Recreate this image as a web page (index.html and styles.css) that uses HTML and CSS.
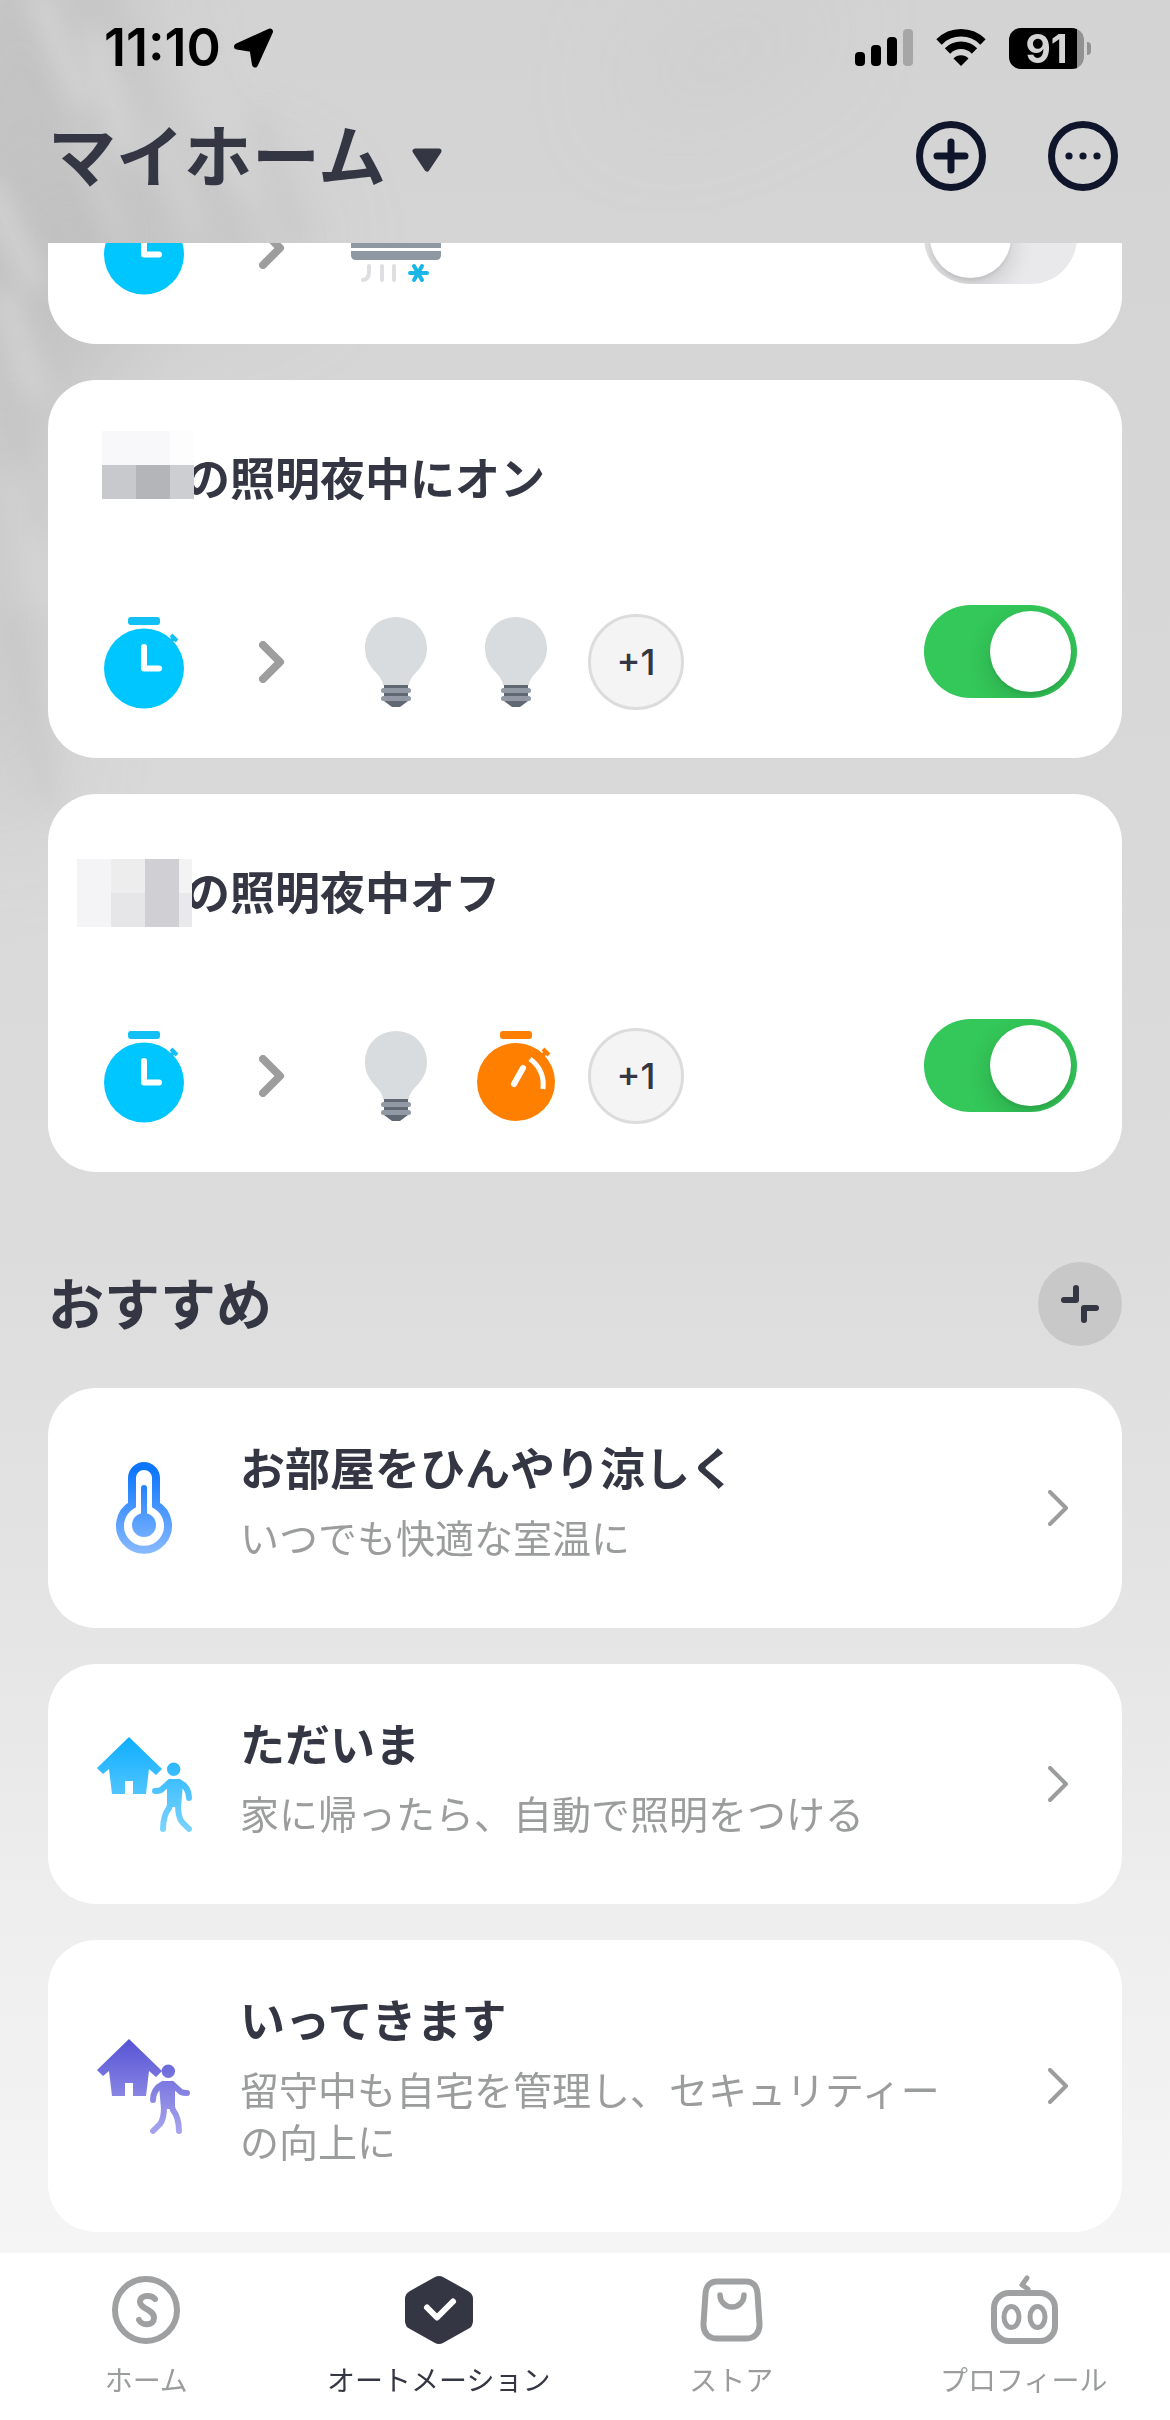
FILE: index.html
```html
<!DOCTYPE html>
<html lang="ja">
<head>
<meta charset="utf-8">
<meta name="viewport" content="width=device-width, initial-scale=1">
<title>オートメーション</title>
<link rel="stylesheet" href="styles.css">
</head>
<body>
<svg class="defs" width="0" height="0" aria-hidden="true">
  <defs>
    <linearGradient id="g-thermo" gradientUnits="userSpaceOnUse" x1="0" y1="0" x2="0" y2="96"><stop offset="0.1" stop-color="#0d76ff"/><stop offset="1" stop-color="#8cbcff"/></linearGradient>
    <linearGradient id="g-home" gradientUnits="userSpaceOnUse" x1="0" y1="0" x2="0" y2="96"><stop offset="0" stop-color="#0cadff"/><stop offset="1" stop-color="#7dd4ff"/></linearGradient>
    <linearGradient id="g-leave" gradientUnits="userSpaceOnUse" x1="0" y1="0" x2="0" y2="96"><stop offset="0" stop-color="#5552d4"/><stop offset="1" stop-color="#a9a6ee"/></linearGradient>
    <symbol id="i-clock" viewBox="0 0 96 96">
      <rect x="32" y="3" width="32" height="8" rx="3" fill="#12c0f5"/>
      <circle cx="48" cy="54.500" r="40" fill="#00c6ff"/>
      <path d="M73 29l5-5M75 21l6 6" stroke="#12c0f5" stroke-width="4" fill="none"/>
      <path d="M48 33v21.500h15" stroke="#fff" stroke-width="6" stroke-linecap="round" stroke-linejoin="round" fill="none"/>
    </symbol>
    <symbol id="i-timer" viewBox="0 0 96 96">
      <rect x="32" y="3" width="32" height="8" rx="3" fill="#ff8000"/>
      <circle cx="48" cy="54" r="39" fill="#ff8000"/>
      <path d="M73 29l5-5M75 21l6 6" stroke="#ff8000" stroke-width="4" fill="none"/>
      <path d="M46 56l9-16" stroke="#fff" stroke-width="6" stroke-linecap="round" fill="none"/>
      <path d="M62 31Q77 42 75 61" stroke="#fff" stroke-width="5" fill="none"/>
    </symbol>
    <symbol id="i-bulb" viewBox="0 0 96 96">
      <path d="M48 3c18 0 31 14 31 31 0 21-17 25-18 37H35C34 59 17 55 17 34 17 17 30 3 48 3z" fill="#d9dcdf"/>
      <path d="M36 71h24v16l-8 6h-8l-8-6z" fill="#5f6873"/>
      <rect x="33" y="74" width="30" height="5" rx="2.500" fill="#9199a5"/>
      <rect x="33" y="82" width="30" height="5" rx="2.500" fill="#9199a5"/>
    </symbol>
    <symbol id="i-aircon" viewBox="0 0 96 96">
      <path d="M3 24h90v24H3z" fill="#8e98a3"/>
      <path d="M3 51h90v4q0 5-5 5H8q-5 0-5-5z" fill="#8e98a3"/>
      <path d="M21 66v6q0 7-6 8M34 66v14M46 66v14" stroke="#dfdfe1" stroke-width="4" stroke-linecap="round" fill="none"/>
      <path d="M62 73h17M66 66l8 14M74 66l-8 14" stroke="#1ab6e8" stroke-width="4" stroke-linecap="round" fill="none"/>
    </symbol>
    <symbol id="i-arrow" viewBox="0 0 26 42">
      <path d="M4 4l17 17L4 38" stroke="#9d9d9d" stroke-width="8" stroke-linecap="round" stroke-linejoin="round" fill="none"/>
    </symbol>
    <symbol id="i-next" viewBox="0 0 20 36">
      <path d="M2 2l16 16L2 34" stroke="#9b9c9c" stroke-width="4" stroke-linecap="round" stroke-linejoin="round" fill="none"/>
    </symbol>
    <symbol id="i-house" viewBox="0 0 66 60">
      <path d="M33 1L1 32l6 6 6-5 3 25h13V45h8v13h13l3-25 7 6 6-6z"/>
    </symbol>
    <g id="i-person" stroke-linecap="round" stroke-linejoin="round">
      <circle cx="77.700" cy="33.300" r="6.700" stroke="none"/>
      <path d="M73 43h10l4 5-2 23H71V50l-1-4z" stroke="none"/>
      <path d="M74 46L65 54q-2 1-6 1M83 46q10 5 10 16M74 69l-1 3q-6 8-6 21M82 69q0 12 4 17l7 7" stroke-width="6" fill="none"/>
    </g>
  </defs>
</svg>

<svg class="backdrop" aria-hidden="true">
  <defs><filter id="soft" x="-20%" y="-20%" width="140%" height="140%"><feGaussianBlur stdDeviation="12"/></filter>
  <filter id="haze" x="-50%" y="-50%" width="200%" height="200%"><feGaussianBlur stdDeviation="50"/></filter></defs>
  <g filter="url(#haze)">
    <ellipse cx="20" cy="180" rx="130" ry="260" fill="#b9b9b9" opacity=".6"/>
    <ellipse cx="150" cy="240" rx="150" ry="60" fill="#bcbcbc" opacity=".6"/>
    <ellipse cx="0" cy="600" rx="45" ry="240" fill="#bdbdbd" opacity=".6"/>
    <path d="M640 95l170 -80" stroke="#c6c6c6" stroke-width="50" opacity=".5"/>
  </g>
  <g filter="url(#soft)" fill="none" stroke-linecap="round">
    <path d="M40 0l40 100M95 40l30 110M-10 190l45 90M5 300l30 90M20 480l20 120" stroke="#d8d8d8" stroke-width="22" opacity=".75"/>
    <path d="M75 130l45 105M140 90l55 140M180 20l70 170" stroke="#d6d6d6" stroke-width="16" opacity=".6"/>
    <path d="M200 160l40 90M100 -10l60 140M260 120l40 120M10 400l25 130M10 620l40 180" stroke="#bebebe" stroke-width="18" opacity=".4"/>
  </g>
</svg>

<div class="app">
  <header class="top">
    <div class="status">
      <div class="status-left">
        <span class="time">11:10</span>
        <svg width="40" height="40" viewBox="0 0 40 40" aria-hidden="true"><path d="M3 18.500L36 3.500 21 36.500 18.500 21z" stroke="#000" stroke-width="6" stroke-linejoin="round"/></svg>
      </div>
      <div class="status-right">
        <svg width="58" height="38" viewBox="0 0 58 38" aria-hidden="true"><rect y="23" width="10" height="14" rx="4"/><rect x="16" y="16" width="10" height="21" rx="4"/><rect x="32" y="8" width="10" height="29" rx="4"/><rect x="48" width="10" height="37" rx="4" fill="#a6a6a6"/></svg>
        <svg width="50" height="38" viewBox="0 0 50 38" aria-hidden="true"><g fill="none" stroke="#000" stroke-width="7.500"><path d="M3 13a31 31 0 0 1 44 0"/><path d="M11.500 22a19 19 0 0 1 27 0"/></g><path d="M17.500 29.500a10.500 10.500 0 0 1 15 0L25 37z"/></svg>
        <div class="battery"><span class="battery-level">91</span><span class="battery-nub"></span></div>
      </div>
    </div>
    <div class="bar">
      <h1><button class="home-select" type="button">マイホーム
        <svg width="30" height="26" viewBox="0 0 30 26" aria-hidden="true"><path d="M3 3h24L15 21z" fill="#343643" stroke="#343643" stroke-width="5" stroke-linejoin="round"/></svg>
      </button></h1>
      <div class="actions">
        <button type="button" aria-label="追加"><svg width="70" height="70" viewBox="0 0 70 70"><circle cx="35" cy="35" r="31.500" stroke="#0f162b" stroke-width="7" fill="none"/><path d="M35 21v28M21 35h28" stroke="#0f162b" stroke-width="7" stroke-linecap="round"/></svg></button>
        <button type="button" aria-label="メニュー"><svg width="70" height="70" viewBox="0 0 70 70"><circle cx="35" cy="35" r="31.500" stroke="#0f162b" stroke-width="7" fill="none"/><g fill="#0f162b"><circle cx="21" cy="35" r="3.600"/><circle cx="35" cy="35" r="3.600"/><circle cx="49" cy="35" r="3.600"/></g></svg></button>
      </div>
    </div>
  </header>

  <main class="content">
    <section class="stack">
      <article class="card scene scene-scrolled">
        <div class="flow">
          <svg class="slot"><use href="#i-clock"/></svg>
          <svg class="arrow"><use href="#i-arrow"/></svg>
          <div class="devices"><svg class="slot"><use href="#i-aircon"/></svg></div>
          <input class="switch" type="checkbox" aria-label="エアコン">
        </div>
      </article>
      <article class="card scene">
        <h2 class="scene-title"><span class="mask mask-a" aria-hidden="true"><i></i><i></i><i></i><i></i><i></i><i></i></span>の照明夜中にオン</h2>
        <div class="flow">
          <svg class="slot"><use href="#i-clock"/></svg>
          <svg class="arrow"><use href="#i-arrow"/></svg>
          <div class="devices"><svg class="slot"><use href="#i-bulb"/></svg><svg class="slot"><use href="#i-bulb"/></svg><span class="more">+1</span></div>
          <input class="switch" type="checkbox" checked aria-label="の照明夜中にオン">
        </div>
      </article>
      <article class="card scene">
        <h2 class="scene-title"><span class="mask mask-b" aria-hidden="true"><i></i><i></i><i></i><i></i></span>の照明夜中オフ</h2>
        <div class="flow">
          <svg class="slot"><use href="#i-clock"/></svg>
          <svg class="arrow"><use href="#i-arrow"/></svg>
          <div class="devices"><svg class="slot"><use href="#i-bulb"/></svg><svg class="slot"><use href="#i-timer"/></svg><span class="more">+1</span></div>
          <input class="switch" type="checkbox" checked aria-label="の照明夜中オフ">
        </div>
      </article>
    </section>

    <div class="section-head">
      <h2>おすすめ</h2>
      <button class="collapse" type="button" aria-label="折りたたむ"><svg width="38" height="38" viewBox="0 0 38 38"><path d="M3 15h12V3M35 23H23v12" stroke="#343643" stroke-width="6" stroke-linecap="round" stroke-linejoin="round" fill="none"/></svg></button>
    </div>

    <section class="stack">
      <a class="card tip" href="#cool">
        <svg class="slot" viewBox="0 0 96 96"><path d="M36 45V18a12 12 0 0 1 24 0v27a24 24 0 1 1-24 0z" fill="none" stroke="url(#g-thermo)" stroke-width="8"/><circle cx="48" cy="65" r="12" fill="url(#g-thermo)"/><path d="M45 28a3 3 0 0 1 6 0v30h-6z" fill="url(#g-thermo)"/></svg>
        <div class="tip-text"><h3>お部屋をひんやり涼しく</h3><p>いつでも快適な室温に</p></div>
        <svg class="next"><use href="#i-next"/></svg>
      </a>
      <a class="card tip" href="#back">
        <svg class="slot" viewBox="0 0 96 96" fill="url(#g-home)" stroke="none"><use href="#i-house" width="66" height="60"/><use href="#i-person" stroke="url(#g-home)"/></svg>
        <div class="tip-text"><h3>ただいま</h3><p>家に帰ったら、自動で照明をつける</p></div>
        <svg class="next"><use href="#i-next"/></svg>
      </a>
      <a class="card tip" href="#leave">
        <svg class="slot" viewBox="0 0 96 96" fill="url(#g-leave)" stroke="none"><use href="#i-house" width="66" height="60"/><use href="#i-person" stroke="url(#g-leave)" transform="translate(150) scale(-1 1)"/></svg>
        <div class="tip-text"><h3>いってきます</h3><p>留守中も自宅を管理し、セキュリティーの向上に</p></div>
        <svg class="next"><use href="#i-next"/></svg>
      </a>
    </section>
  </main>

  <nav class="tabs">
    <a href="#home"><svg viewBox="0 0 68 68"><circle cx="34" cy="34" r="31" stroke-width="6"/><path d="M43 23C40 19 28 18 28 26 28 33 42 33 42 42c0 8-12 8-15 2" stroke-width="6"/></svg>ホーム</a>
    <a href="#automation" class="active" aria-current="page"><svg viewBox="0 0 68 68"><path d="M34 9l25 14v22L34 59 9 45V23z" fill="#343643" stroke="#343643" stroke-width="18"/><path d="M22 31.500l10 10 16-16" stroke="#fff" stroke-width="6"/></svg>オートメーション</a>
    <a href="#store"><svg viewBox="0 0 68 68"><path d="M20 5.500h29c7 0 11 5 11.500 12l2 30c.5 9-5 15-13 15h-30c-8 0-13.500-6-13-15l2-30c.5-7 4.500-12 11.500-12z" stroke-width="6"/><path d="M23 19a12 12 0 0 0 24 0" stroke-width="5.500"/></svg>ストア</a>
    <a href="#profile"><svg viewBox="0 0 68 68"><rect x="4" y="17" width="61" height="48" rx="15" stroke-width="6"/><ellipse cx="21.500" cy="41" rx="7.500" ry="10.500" stroke-width="5"/><ellipse cx="47.500" cy="41" rx="7.500" ry="10.500" stroke-width="5"/><path d="M37 2l-5 7 6 4" stroke-width="5"/></svg>プロフィール</a>
  </nav>
</div>
</body>
</html>
```
FILE: styles.css
```css
* { box-sizing: border-box; margin: 0; padding: 0; }

body {
  position: relative;
  font-family: "Noto Sans CJK JP", "Inter", sans-serif;
  color: #343643;
  background: linear-gradient(#d3d3d3 0%, #d8d8d8 30%, #dcdcdc 51%, #e4e4e4 66%, #eeeeee 79%, #f5f5f5 93%);
}

button { border: 0; background: none; color: inherit; font: inherit; cursor: pointer; }
a { color: inherit; text-decoration: none; }
svg { display: block; flex: none; }

.defs { position: absolute; }
.backdrop { position: absolute; top: 0; left: 0; width: 100%; height: 1000px; }

.app {
  position: relative;
  display: flex;
  flex-direction: column;
  min-height: 100vh;
}

/* Status bar and title bar */
.top { padding-bottom: 27px; }

.status {
  display: flex;
  justify-content: space-between;
  align-items: center;
  height: 96px;
  padding: 0 79px 0 104px;
}
.status-left, .status-right { display: flex; align-items: center; }
.status-left { gap: 13px; }
.status-right { gap: 23px; }

.time {
  color: #000;
  font: 600 52px/60px "Inter", sans-serif;
}

.battery { display: flex; align-items: center; gap: 3px; }
.battery-level {
  width: 75px;
  height: 41px;
  border-radius: 12px;
  background: linear-gradient(90deg, #000 68px, #929292 68px);
  color: #d4d4d4;
  font: 700 39px/41px "Inter", sans-serif;
  text-align: center;
}
.battery-nub { width: 4px; height: 13px; border-radius: 0 4px 4px 0; background: #929292; }

.bar {
  display: flex;
  justify-content: space-between;
  align-items: center;
  height: 120px;
  padding: 0 52px 0 48px;
}
.home-select {
  display: flex;
  align-items: center;
  gap: 26px;
  padding-bottom: 6px;
  font-size: 68px;
  line-height: 80px;
  font-weight: 600;
}
.home-select svg { margin-top: 16px; }
.actions { display: flex; gap: 62px; }

/* Cards */
.content { padding: 0 48px 19px; }
.stack { display: flex; flex-direction: column; gap: 36px; }
.card { background: #fff; border-radius: 48px; }

.slot { width: 96px; height: 96px; }

.scene { padding: 64px 45px 48px 48px; }
.scene-scrolled {
  display: flex;
  align-items: flex-end;
  height: 101px;
  padding-top: 0;
  overflow: hidden;
  border-radius: 0 0 48px 48px;
}
.scene-title {
  position: relative;
  margin-bottom: 104px;
  padding-left: 89px;
  font-size: 45px;
  line-height: 66px;
  font-weight: 600;
}
.mask { position: absolute; display: grid; }
.mask-a { top: -13px; left: 6px; grid-template: 34px 34px / 34px 34px 24px; }
.mask-a i { background: #f8f8fa; }
.mask-a i:nth-child(3) { background: #fdfdfe; }
.mask-a i:nth-child(4) { background: #c8c9cd; }
.mask-a i:nth-child(5) { background: #b4b5b9; }
.mask-a i:nth-child(6) { background: #cdced2; }
.mask-b { top: 1px; left: -19px; grid-template: 68px / 34px 34px 34px 13px; }
.mask-b i { background: #f4f4f6; }
.mask-b i:nth-child(2) { background: linear-gradient(#ededee 50%, #e6e6e8 50%); }
.mask-b i:nth-child(3) { background: #cfcfd4; }
.mask-b i:nth-child(4) { background: linear-gradient(#f3f3f4 50%, #e9e9eb 50%); }

.flow { display: flex; align-items: center; width: 100%; height: 96px; }
.arrow { width: 26px; height: 42px; margin: 0 63px 0 67px; }
.devices { display: flex; gap: 24px; }
.more {
  width: 96px;
  height: 96px;
  border: 3px solid #dcdcdc;
  border-radius: 50%;
  background: #f4f4f4;
  font: 500 36px/90px "Inter", sans-serif;
  text-align: center;
}

.switch {
  appearance: none;
  align-self: flex-end;
  width: 153px;
  height: 93px;
  margin: 0 0 12px auto;
  padding: 6px;
  border-radius: 47px;
  background: #e9e9eb;
  overflow: hidden;
  cursor: pointer;
}
.switch::before {
  content: "";
  display: block;
  width: 81px;
  height: 81px;
  border-radius: 50%;
  background: #fff;
  box-shadow: 0 9px 24px rgba(0, 0, 0, 0.16), 0 3px 3px rgba(0, 0, 0, 0.06);
}
.switch:checked { background: #34c759; }
.switch:checked::before { margin-left: 60px; }

/* Recommendations */
.section-head {
  display: flex;
  justify-content: space-between;
  align-items: center;
  padding: 90px 0 42px;
}
.section-head h2 { padding-bottom: 6px; font-size: 56px; line-height: 78px; font-weight: 600; }
.collapse {
  display: grid;
  place-items: center;
  width: 84px;
  height: 84px;
  border-radius: 50%;
  background: #c8c8c8;
}

.tip {
  display: flex;
  align-items: center;
  gap: 48px;
  padding: 46px 54px 66px 48px;
}
.tip .slot, .tip .next { margin-top: 20px; }
.tip-text { flex: 1; padding-right: 60px; }
.tip-text h3 { font-size: 45px; line-height: 66px; font-weight: 600; }
.tip-text p {
  margin-top: 10px;
  color: #9b9d9d;
  font-size: 39px;
  line-height: 52px;
}
.next { width: 20px; height: 36px; }

/* Bottom navigation */
.tabs {
  display: grid;
  grid-template-columns: repeat(4, 1fr);
  margin-top: auto;
  background: #fff;
}
.tabs a {
  display: flex;
  flex-direction: column;
  align-items: center;
  gap: 18px;
  padding: 23px 0 24px;
  color: #9b9d9d;
  font-size: 28px;
  line-height: 34px;
}
.tabs svg {
  width: 68px;
  height: 68px;
  overflow: visible;
  fill: none;
  stroke: #9fa0a1;
  stroke-linecap: round;
  stroke-linejoin: round;
}
.tabs .active { color: #343643; }
```
